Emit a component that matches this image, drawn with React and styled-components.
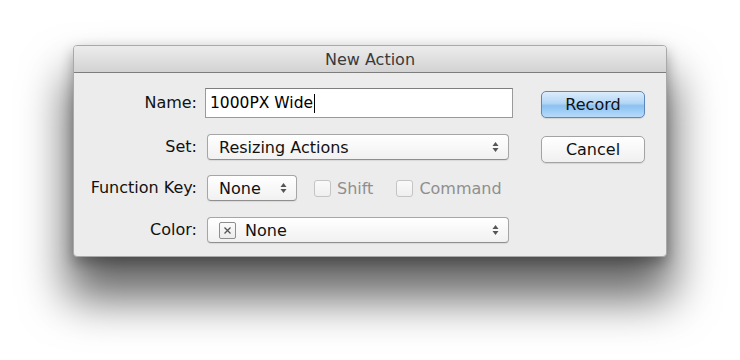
import React from "react";
import styled, { createGlobalStyle } from "styled-components";

const GlobalStyle = createGlobalStyle`
  html, body {
    margin: 0;
    background: #ffffff;
    font-family: "DejaVu Sans", "Liberation Sans", sans-serif;
  }
`;

const Page = styled.div`
  width: 740px;
  height: 360px;
  padding: 45px 0 0 73px;
  box-sizing: border-box;
  overflow: hidden;
`;

const Dialog = styled.div`
  width: 594px;
  height: 212px;
  box-sizing: border-box;
  border: 1px solid #a9a9a9;
  border-radius: 4px;
  background: #ececec;
  box-shadow: 0 36px 46px 6px rgba(0, 0, 0, 0.6), 0 6px 14px rgba(0, 0, 0, 0.3);
  display: flex;
  flex-direction: column;
  overflow: hidden;
`;

const TitleBar = styled.div`
  height: 26px;
  flex-shrink: 0;
  display: flex;
  align-items: center;
  justify-content: center;
  background: linear-gradient(#ececec, #d3d3d3);
  border-bottom: 1px solid #7d7d7d;
  color: #3a3a3a;
  font-size: 16px;
`;

const Body = styled.div`
  flex: 1;
  display: flex;
  align-items: flex-start;
  padding: 15px 21px 0 0;
`;

const Form = styled.div`
  flex: 1;
  display: grid;
  grid-template-columns: 123px 1fr;
  align-content: start;
  column-gap: 8px;
  align-items: center;
`;

const Label = styled.div`
  text-align: right;
  font-size: 16px;
  color: #111;
  height: ${(p) => p.h}px;
  line-height: ${(p) => p.h}px;
  margin-bottom: ${(p) => p.mb || 0}px;
`;

const Row = styled.div`
  display: flex;
  align-items: center;
  height: ${(p) => p.h}px;
  margin-bottom: ${(p) => p.mb || 0}px;
`;

const TextInput = styled.div`
  width: 308px;
  height: 30px;
  box-sizing: border-box;
  border: 1px solid #9a9a9a;
  border-top-color: #7e7e7e;
  background: #fff;
  font-size: 15.5px;
  color: #000;
  display: flex;
  align-items: center;
  padding-left: 4px;
`;

const Caret = styled.span`
  display: inline-block;
  width: 1px;
  height: 19px;
  background: #000;
  margin-left: 1px;
`;

const Select = styled.div`
  width: ${(p) => p.w}px;
  height: 26px;
  margin-left: 2px;
  box-sizing: border-box;
  border: 1px solid #a6a6a6;
  border-bottom-color: #8f8f8f;
  border-radius: 4px;
  background: linear-gradient(#ffffff, #f1f1f1);
  box-shadow: 0 1px 1px rgba(0, 0, 0, 0.08);
  display: flex;
  align-items: center;
  padding: 0 9px 0 11px;
  font-size: 16px;
  color: #111;
`;

const SelectText = styled.span`
  flex: 1;
`;

const Arrows = () => (
  <svg width="7" height="12" viewBox="0 0 7 12">
    <path d="M3.5 1 L6.5 5 L0.5 5 Z" fill="#555" />
    <path d="M3.5 11 L6.5 7 L0.5 7 Z" fill="#555" />
  </svg>
);

const Swatch = styled.span`
  width: 17px;
  height: 17px;
  box-sizing: border-box;
  border: 1px solid #8e8e8e;
  border-radius: 2px;
  background: linear-gradient(#fbfbfb, #ececec);
  display: inline-flex;
  align-items: center;
  justify-content: center;
  margin-right: 9px;
`;

const Check = styled.label`
  display: flex;
  align-items: center;
  gap: 6px;
  font-size: 16px;
  color: #8f8f8f;
  margin-left: ${(p) => p.ml}px;
`;

const Box = styled.span`
  width: 17px;
  height: 17px;
  box-sizing: border-box;
  border: 1px solid #c4c4c4;
  border-radius: 3px;
  background: linear-gradient(#fafafa, #efefef);
`;

const Buttons = styled.div`
  width: 104px;
  display: flex;
  flex-direction: column;
  gap: 18px;
  padding-top: 3px;
  margin-left: 28px;
`;

const Button = styled.div`
  height: 27px;
  box-sizing: border-box;
  border-radius: 5px;
  display: flex;
  align-items: center;
  justify-content: center;
  font-size: 16px;
  color: #111;
  border: 1px solid ${(p) => (p.primary ? "#5c87bd" : "#a3a3a3")};
  background: ${(p) =>
    p.primary
      ? "linear-gradient(#dcecfb 0%, #b3d6f6 45%, #8cc1f0 55%, #b6dbfa 100%)"
      : "linear-gradient(#ffffff, #f0f0f0)"};
  box-shadow: 0 1px 1px rgba(0, 0, 0, 0.1);
`;

export default function App() {
  return (
    <>
      <GlobalStyle />
      <Page>
        <Dialog>
          <TitleBar>New Action</TitleBar>
          <Body>
            <Form>
              <Label h={30} mb={16}>Name:</Label>
              <Row h={30} mb={16}>
                <TextInput>
                  1000PX Wide
                  <Caret />
                </TextInput>
              </Row>

              <Label h={26} mb={15}>Set:</Label>
              <Row h={26} mb={15}>
                <Select w={302}>
                  <SelectText>Resizing Actions</SelectText>
                  <Arrows />
                </Select>
              </Row>

              <Label h={26} mb={16}>Function Key:</Label>
              <Row h={26} mb={16}>
                <Select w={90}>
                  <SelectText>None</SelectText>
                  <Arrows />
                </Select>
                <Check ml={17}>
                  <Box />
                  Shift
                </Check>
                <Check ml={23}>
                  <Box />
                  Command
                </Check>
              </Row>

              <Label h={26}>Color:</Label>
              <Row h={26}>
                <Select w={302}>
                  <Swatch>
                    <svg width="9" height="9" viewBox="0 0 9 9">
                      <path d="M1.5 1.5 L7.5 7.5 M7.5 1.5 L1.5 7.5" stroke="#555" strokeWidth="1.3" />
                    </svg>
                  </Swatch>
                  <SelectText>None</SelectText>
                  <Arrows />
                </Select>
              </Row>
            </Form>
            <Buttons>
              <Button primary>Record</Button>
              <Button>Cancel</Button>
            </Buttons>
          </Body>
        </Dialog>
      </Page>
    </>
  );
}
